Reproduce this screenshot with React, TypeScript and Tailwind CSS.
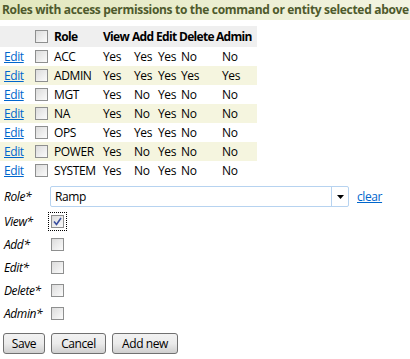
import * as React from 'react';

const roles = [
  { name: 'ACC', v: 'Yes', a: 'Yes', e: 'Yes', d: 'No', ad: 'No' },
  { name: 'ADMIN', v: 'Yes', a: 'Yes', e: 'Yes', d: 'Yes', ad: 'Yes' },
  { name: 'MGT', v: 'Yes', a: 'No', e: 'Yes', d: 'No', ad: 'No' },
  { name: 'NA', v: 'Yes', a: 'No', e: 'Yes', d: 'No', ad: 'No' },
  { name: 'OPS', v: 'Yes', a: 'Yes', e: 'Yes', d: 'No', ad: 'No' },
  { name: 'POWER', v: 'Yes', a: 'No', e: 'Yes', d: 'No', ad: 'No' },
  { name: 'SYSTEM', v: 'Yes', a: 'No', e: 'Yes', d: 'No', ad: 'No' },
];

function Box({ checked = false }: { checked?: boolean }) {
  return (
    <span className="inline-flex w-[13px] h-[13px] border border-[#8e8f8f] bg-gradient-to-br from-[#dcdcdc] to-[#fbfbfb] items-center justify-center">
      {checked && (
        <svg width="9" height="9" viewBox="0 0 9 9">
          <path d="M1 4.5 L3.5 7.5 L8 1" fill="none" stroke="#3a4fa0" strokeWidth="1.6" />
        </svg>
      )}
    </span>
  );
}

function Btn({ children, w }: { children: React.ReactNode; w: string }) {
  return (
    <button className={`h-[21px] ${w} border border-[#707070] rounded-[3px] bg-gradient-to-b from-[#f2f2f2] via-[#ebebeb] to-[#cfcfcf] text-[12px] text-black leading-none`}>
      {children}
    </button>
  );
}

export default function App() {
  const perms = ['View', 'Add', 'Edit', 'Delete', 'Admin'];
  return (
    <div className="w-[410px] h-[359px] bg-white text-[12px] text-black font-['Open_Sans',sans-serif] tracking-[-0.4px] overflow-hidden">
      <div className="h-[20px] flex items-center pl-[2px] bg-gradient-to-r from-[#e3e8be] to-[#f3f4e2] text-[#4e5a2c] font-bold text-[12px] tracking-[-0.32px] whitespace-nowrap">
        Roles with access permissions to the command or entity selected above
      </div>

      <table className="mt-[6px] w-[257px] border-collapse table-fixed">
        <colgroup>
          <col className="w-[32px]" />
          <col className="w-[20px]" />
          <col className="w-[51px]" />
          <col className="w-[28px]" />
          <col className="w-[24px]" />
          <col className="w-[24px]" />
          <col className="w-[34px]" />
          <col className="w-[44px]" />
        </colgroup>
        <thead>
          <tr className="h-[21px] bg-[#efefef] font-bold text-left tracking-[-0.7px]">
            <th />
            <th className="pl-[3px]"><span className="flex"><Box /></span></th>
            <th className="pl-[2px] font-bold">Role</th>
            <th className="pl-0 font-bold">View</th>
            <th className="pl-[1px] font-bold">Add</th>
            <th className="pl-[1px] font-bold">Edit</th>
            <th className="pl-0 font-bold">Delete</th>
            <th className="pl-[3px] font-bold">Admin</th>
          </tr>
        </thead>
        <tbody>
          {roles.map((r, i) => (
            <tr key={r.name} className={`h-[19px] ${i % 2 === 1 ? 'bg-[#f5f5df]' : ''}`}>
              <td className="pl-[4px]"><a className="text-[#0066cc] underline">Edit</a></td>
              <td className="pl-[3px]"><span className="flex"><Box /></span></td>
              <td className="pl-[2px]">{r.name}</td>
              <td className="pl-0">{r.v}</td>
              <td className="pl-[3px]">{r.a}</td>
              <td className="pl-[3px]">{r.e}</td>
              <td className="pl-[2px]">{r.d}</td>
              <td className="pl-[9px]">{r.ad}</td>
            </tr>
          ))}
        </tbody>
      </table>

      <div className="mt-[6px] flex items-center">
        <span className="w-[50px] pl-[4px] italic">Role*</span>
        <div className="w-[299px] h-[21px] border border-[#b7d3f0] rounded-[2px] flex">
          <span className="flex-1 pl-[4px] flex items-center">Ramp</span>
          <span className="w-[17px] border-l border-[#b7d3f0] flex items-center justify-center">
            <svg width="7" height="4" viewBox="0 0 7 4"><path d="M0 0 H7 L3.5 4 Z" fill="#000" /></svg>
          </span>
        </div>
        <a className="ml-[8px] text-[#0066cc] underline">clear</a>
      </div>

      <div className="mt-[8px] flex flex-col gap-[10px]">
        {perms.map((p) => (
          <div key={p} className="flex items-center h-[13px]">
            <span className="w-[51px] pl-[4px] italic">{p}*</span>
            {p === 'View' ? (
              <span className="flex p-[2px] -m-[3px] border border-dotted border-black">
                <Box checked />
              </span>
            ) : (
              <Box />
            )}
          </div>
        ))}
      </div>

      <div className="mt-[13px] pl-[3px] flex gap-[6px]">
        <Btn w="w-[42px]">Save</Btn>
        <Btn w="w-[55px]">Cancel</Btn>
        <Btn w="w-[66px]">Add new</Btn>
      </div>
    </div>
  );
}
